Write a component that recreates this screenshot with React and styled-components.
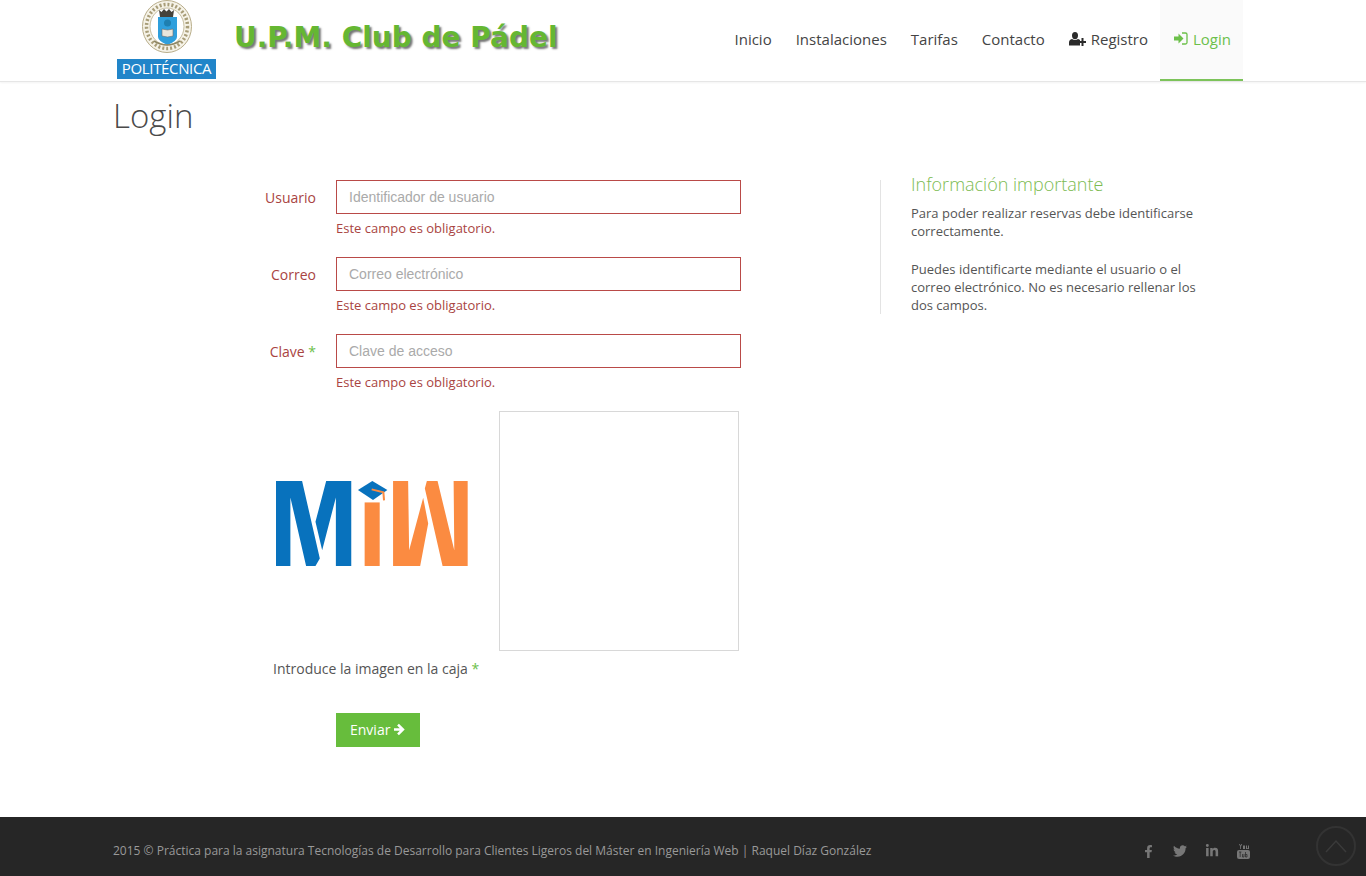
import React from "react";
import styled, { createGlobalStyle } from "styled-components";
import { FaFacebookF, FaTwitter, FaLinkedinIn } from "react-icons/fa";

const GlobalStyle = createGlobalStyle`
  * { box-sizing: border-box; }
  html, body { margin: 0; padding: 0; background: #fff; }
  body { font-family: "Open Sans", sans-serif; font-size: 13px; color: #444; }
`;

const NAV_LINKS = ["Inicio", "Instalaciones", "Tarifas", "Contacto"];

const FIELDS = [
  { label: "Usuario", placeholder: "Identificador de usuario" },
  { label: "Correo", placeholder: "Correo electrónico" },
  { label: "Clave", placeholder: "Clave de acceso", required: true },
];

const Seal = () => (
  <svg width="52" height="54" viewBox="0 0 52 54">
    <ellipse cx="26" cy="26.5" rx="24.5" ry="26" fill="#f6f3e8" stroke="#b8ad8a" strokeWidth="1" />
    <ellipse cx="26" cy="26.5" rx="20.5" ry="22" fill="none" stroke="#a89d78" strokeWidth="3.5" strokeDasharray="2 2" />
    <ellipse cx="26" cy="26.5" rx="17" ry="18.5" fill="#fff" stroke="#b8ad8a" strokeWidth="0.8" />
    <path d="M18 10 L20.5 12 L23 9 L25.5 11.5 L28 9 L30.5 12 L33 10 L32 17 L19 17 Z" fill="#45423b" />
    <path d="M17 17 H36 V37 Q36 41 26.5 45 Q17 41 17 37 Z" fill="#2f9fdc" />
    <circle cx="26.5" cy="23" r="3.5" fill="#1f7fb0" />
    <path d="M21 29 L26.5 30 L32 29 V36 L26.5 37 L21 36 Z" fill="#e8e6dc" stroke="#6d6d6d" strokeWidth="0.6" />
    <path d="M13 41 Q26 49 39 41" fill="none" stroke="#8f8663" strokeWidth="1.5" />
  </svg>
);

const MiwLogo = () => (
  <svg width="192" height="85" viewBox="47 48 574 254">
    <polygon fill="#0872bd" points="47,48 125,48 178,280 165,302 137,302 90,97 90,302 47,302" />
    <polygon fill="#0872bd" points="197,48 272,48 272,302 226,302 226,97 185,255 165,170" />
    <rect fill="#fb8b41" x="312" y="112" width="45" height="190" />
    <polygon fill="#0872bd" points="292,75 335,48 380,75 337,105" />
    <path d="M333 73 L368 82 L370 106" fill="none" stroke="#fb8b41" strokeWidth="6" />
    <polygon fill="#fb8b41" points="397,48 442,48 445,255 487,98 502,175 478,302 397,302" />
    <polygon fill="#fb8b41" points="492,70 498,48 530,48 580,255 578,48 620,48 620,302 545,302" />
  </svg>
);

const UserPlusIcon = () => (
  <svg width="17" height="14" viewBox="0 0 17 14">
    <ellipse cx="6" cy="3.6" rx="3" ry="3.6" fill="currentColor" />
    <path d="M0 13.5 V10.5 Q0 7.6 3 7 Q6 9 9 7 Q10.5 7.3 11 8 V13.5 Z" fill="currentColor" />
    <path d="M9.5 9 H12.5 V6 H14.5 V9 H17 V11 H14.5 V14 H12.5 V11 H9.5 Z" fill="currentColor" />
  </svg>
);

const SignInIcon = () => (
  <svg width="14" height="13" viewBox="0 0 14 13">
    <path d="M0 4.5 H4.5 V1.5 L9.5 6.5 L4.5 11.5 V8.5 H0 Z" fill="currentColor" />
    <path d="M8 1 H11.5 Q13 1 13 2.5 V10.5 Q13 12 11.5 12 H8" fill="none" stroke="currentColor" strokeWidth="1.3" />
  </svg>
);

const ArrowIcon = () => (
  <svg width="13" height="13" viewBox="0 0 13 13">
    <polygon points="0,5 6.5,5 3.5,2 5.5,0 12,6.5 5.5,13 3.5,11 6.5,8 0,8" fill="currentColor" />
  </svg>
);

const YoutubeIcon = () => (
  <svg width="13" height="15" viewBox="0 0 13 15">
    <path d="M2 0 L3.2 2.5 V5 H4 V2.5 L5.2 0 H4.4 L3.6 1.6 L2.8 0 Z M6 1.5 H8 V5 H6 Z M9 1.5 H10 V4.3 H11 V1.5 H12 V5 H9 Z" fill="currentColor" />
    <rect x="0" y="6" width="13" height="9" rx="2" fill="currentColor" />
    <path d="M2 8 H4.4 M3.2 8 V13 M5.5 10 V13 H7 V10 M8.5 8 V13 H10 V10.5 H8.5" fill="none" stroke="#262626" strokeWidth="0.7" />
  </svg>
);

const App = () => {
  return (
    <>
      <GlobalStyle />
      <Header>
        <HeaderInner>
          <Brand>
            <BrandLogo>
              <Seal />
              <BrandBadge>POLITÉCNICA</BrandBadge>
            </BrandLogo>
            <BrandTitle>U.P.M. Club de Pádel</BrandTitle>
          </Brand>
          <Nav>
            {NAV_LINKS.map((link) => (
              <NavLink key={link}>{link}</NavLink>
            ))}
            <NavLink>
              <UserPlusIcon /> Registro
            </NavLink>
            <NavLink $active>
              <SignInIcon /> Login
            </NavLink>
          </Nav>
        </HeaderInner>
      </Header>

      <Main>
        <PageTitle>Login</PageTitle>
        <Content>
          <Form>
            {FIELDS.map((field) => (
              <FieldRow key={field.label}>
                <FieldLabel>
                  {field.label}
                  {field.required && <Required> *</Required>}
                </FieldLabel>
                <FieldBody>
                  <Input placeholder={field.placeholder} />
                  <FieldError>Este campo es obligatorio.</FieldError>
                </FieldBody>
              </FieldRow>
            ))}
            <CaptchaRow>
              <CaptchaLogo>
                <MiwLogo />
              </CaptchaLogo>
              <CaptchaBox />
            </CaptchaRow>
            <CaptchaLabel>
              Introduce la imagen en la caja <Required>*</Required>
            </CaptchaLabel>
            <SubmitButton>
              Enviar <ArrowIcon />
            </SubmitButton>
          </Form>
          <Aside>
            <AsideTitle>Información importante</AsideTitle>
            <AsideText>Para poder realizar reservas debe identificarse correctamente.</AsideText>
            <AsideText>
              Puedes identificarte mediante el usuario o el correo electrónico. No es necesario rellenar los dos campos.
            </AsideText>
          </Aside>
        </Content>
      </Main>

      <Footer>
        <FooterInner>
          <FooterText>
            2015 © Práctica para la asignatura Tecnologías de Desarrollo para Clientes Ligeros del Máster en Ingeniería Web | Raquel Díaz González
          </FooterText>
          <Social>
            <FaFacebookF size={13} />
            <FaTwitter size={14} />
            <FaLinkedinIn size={14} />
            <YoutubeIcon />
          </Social>
        </FooterInner>
        <ScrollTop>
          <svg width="24" height="14" viewBox="0 0 24 14">
            <path d="M2 13 L12 2 L22 13" fill="none" stroke="#3a3a3a" strokeWidth="1.5" />
          </svg>
        </ScrollTop>
      </Footer>
    </>
  );
};

const Header = styled.header`
  height: 82px;
  background: #fff;
  border-bottom: 1px solid #e6e6e6;
  box-shadow: 0 1px 2px rgba(0, 0, 0, 0.05);
`;

const HeaderInner = styled.div`
  width: 1140px;
  height: 81px;
  margin: 0 auto;
  padding-right: 10px;
  display: flex;
  justify-content: space-between;
`;

const Brand = styled.div`
  display: flex;
  align-items: flex-start;
  padding-left: 4px;
`;

const BrandLogo = styled.div`
  width: 99px;
  display: flex;
  flex-direction: column;
  align-items: center;
`;

const BrandBadge = styled.div`
  width: 99px;
  height: 20px;
  margin-top: 5px;
  background: #2185c9;
  color: #fff;
  font-family: "Open Sans", sans-serif;
  font-size: 15px;
  line-height: 18px;
  letter-spacing: -0.35px;
  text-align: center;
`;

const BrandTitle = styled.div`
  margin: 20px 0 0 18px;
  font-family: "DejaVu Sans", sans-serif;
  font-weight: 700;
  font-size: 28px;
  line-height: 36px;
  color: #65b732;
  text-shadow: 2px 2px 2px #777;
  white-space: nowrap;
`;

const Nav = styled.nav`
  display: flex;
`;

const NavLink = styled.a`
  display: flex;
  align-items: center;
  gap: 5px;
  height: 81px;
  padding: 0 12px 2px ${(p) => (p.$active ? "14px" : "12px")};
  font-size: 15px;
  color: ${(p) => (p.$active ? "#6cc04a" : "#444")};
  background: ${(p) => (p.$active ? "#fafafa" : "transparent")};
  border-bottom: 2px solid ${(p) => (p.$active ? "#7cc35a" : "transparent")};
  svg {
    color: ${(p) => (p.$active ? "#6cc04a" : "#2b2b2b")};
  }
`;

const Main = styled.main`
  width: 1140px;
  height: 735px;
  margin: 0 auto;
`;

const PageTitle = styled.h1`
  margin: 0;
  height: 98px;
  padding-top: 9px;
  font-size: 33px;
  line-height: 50px;
  font-weight: 300;
  color: #4a4a4a;
`;

const Content = styled.div`
  display: flex;
  align-items: flex-start;
`;

const Form = styled.form`
  width: 767px;
  margin-left: 140px;
`;

const FieldRow = styled.div`
  display: flex;
  gap: 20px;
  height: 77px;
`;

const FieldLabel = styled.label`
  width: 63px;
  font-size: 14px;
  line-height: 36px;
  text-align: right;
  color: #a94442;
  white-space: nowrap;
`;

const Required = styled.span`
  color: #6cc04a;
`;

const FieldBody = styled.div`
  width: 405px;
`;

const Input = styled.input`
  display: block;
  width: 100%;
  height: 34px;
  padding: 0 12px;
  border: 1px solid #b94a48;
  border-radius: 0;
  font-family: "Liberation Sans", sans-serif;
  font-size: 14px;
  color: #555;
  &::placeholder { color: #aaa; opacity: 1; }
`;

const FieldError = styled.div`
  margin-top: 5px;
  font-size: 13px;
  line-height: 18px;
  color: #a94442;
`;

const CaptchaRow = styled.div`
  display: flex;
`;

const CaptchaLogo = styled.div`
  width: 246px;
  padding: 70px 0 0 23px;
`;

const CaptchaBox = styled.div`
  width: 240px;
  height: 240px;
  border: 1px solid #d8d8d8;
`;

const CaptchaLabel = styled.div`
  margin: 8px 0 0 20px;
  font-size: 14px;
  line-height: 20px;
  color: #555;
`;

const SubmitButton = styled.button`
  display: flex;
  align-items: center;
  gap: 4px;
  width: 84px;
  height: 34px;
  margin: 34px 0 0 83px;
  padding: 0 14px 2px;
  border: 0;
  border-radius: 0;
  background: #67bd3c;
  color: #fff;
  font-family: "Open Sans", sans-serif;
  font-size: 14px;
`;

const Aside = styled.aside`
  width: 320px;
  height: 134px;
  margin-left: -140px;
  padding-left: 30px;
  border-left: 1px solid #e3e3e3;
`;

const AsideTitle = styled.h3`
  margin: 0 0 16px;
  font-size: 18px;
  line-height: 8px;
  font-weight: 300;
  color: #7cbb52;
`;

const AsideText = styled.p`
  margin: 0 0 20px;
  font-size: 13px;
  line-height: 18px;
  color: #555;
`;

const Footer = styled.footer`
  position: relative;
  height: 59px;
  background: #262626;
`;

const FooterInner = styled.div`
  width: 1140px;
  height: 100%;
  margin: 0 auto;
  padding: 9px 3px 0 0;
  display: flex;
  align-items: center;
  justify-content: space-between;
`;

const FooterText = styled.div`
  padding-bottom: 1px;
  font-size: 12px;
  color: #999;
`;

const Social = styled.div`
  display: flex;
  align-items: center;
  gap: 18px;
  color: #777;
`;

const ScrollTop = styled.div`
  position: absolute;
  right: 10px;
  top: 9px;
  width: 40px;
  height: 40px;
  display: flex;
  align-items: center;
  justify-content: center;
  border: 2px solid #333;
  border-radius: 50%;
`;

export default App;
